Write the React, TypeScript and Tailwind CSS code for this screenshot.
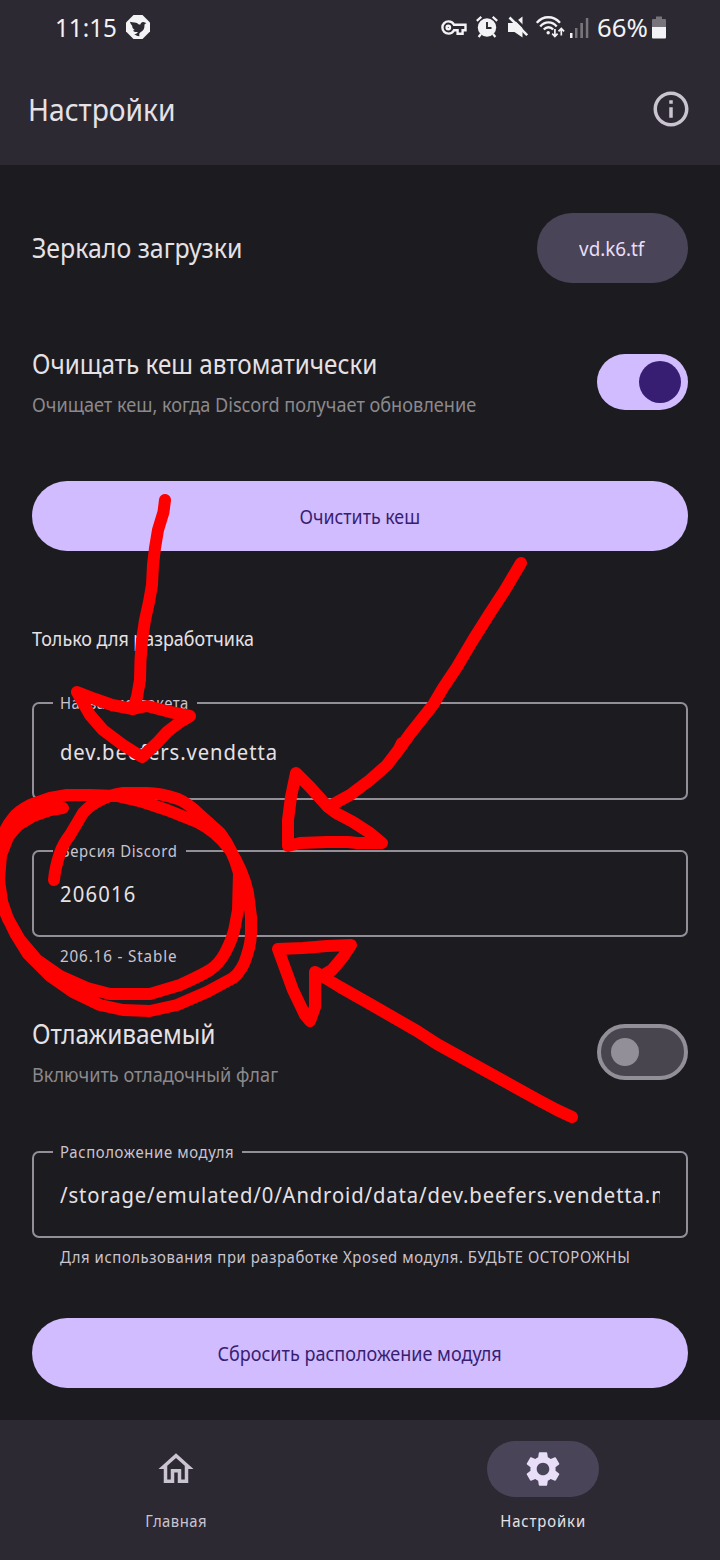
import type { ReactNode } from "react";
import { MdOutlineHome, MdOutlineInfo, MdSettings } from "react-icons/md";

function Dove() {
  return (
    <svg className="h-6 w-6" viewBox="0 0 24 24">
      <path fill="#f3f2f4" d="M7.500 0h9L24 7.500v9L16.500 24h-9L0 16.500v-9z" />
      <path
        fill="#2c2932"
        d="M4 6.800c1.500.5 3 .6 4.600.8 1.800.2 3.100.8 4.200 1.800l1.600.2c.4-1.700 1.400-2.600 2.900-2.500 1.200.1 1.700.6 3 .9l-1.800 1.500c.1 4-1 6.200-3.600 7.400-1.500.9-1.900 2-1.500 4.300-2.200-.1-4-.8-5.200-2.100 2-.2 3.200-.9 3.700-2.200-2.200.3-4-.2-4.900-1.500l1.700-.5C6.800 13.800 6 12.300 6.200 10.800 5 9.700 4.200 8.200 4 6.800z"
      />
    </svg>
  );
}

function KeyIcon() {
  return (
    <svg className="h-[15px] w-[26px]" viewBox="0 0 26 15" fill="none" stroke="#f3f2f4" strokeWidth="2.400">
      <path d="M13 4.800C11.900 2.400 9.800 1.400 7.500 1.400a6 6 0 0 0 0 12.200c2.300 0 4.400-1.200 5.500-3.400h3.600v3.500h5v-3.500h2.900V4.800z" />
      <circle cx="7.300" cy="7.500" r="1.700" />
    </svg>
  );
}

function AlarmIcon() {
  return (
    <svg className="h-[22px] w-[22px]" viewBox="0 0 22 22" fill="none" stroke="#f3f2f4">
      <circle cx="11" cy="11.500" r="9.200" fill="#f3f2f4" stroke="none" />
      <path strokeWidth="2.200" d="M.8 4.800 5.300.9M21.200 4.800 16.700.9M5 18l-2.400 3M17 18l2.400 3" />
      <path stroke="#2c2932" strokeWidth="1.900" d="M11 6v6h4.500" />
    </svg>
  );
}

function MuteIcon() {
  return (
    <svg className="h-[22px] w-[20px]" viewBox="0 0 20 22" fill="none">
      <path fill="#f3f2f4" d="M0 7h6L14.500.5v21L6.500 16H0z" />
      <path stroke="#2c2932" strokeWidth="2.600" d="M3.800-.5 22 17.700" />
      <path stroke="#f3f2f4" strokeWidth="2.600" d="M1.500 1.500 19.200 19.200" />
    </svg>
  );
}

function WifiIcon() {
  return (
    <svg className="h-[22px] w-[29px]" viewBox="0 0 29 22" fill="none" stroke="#f3f2f4" strokeWidth="2.300">
      <path d="M.8 6.800C7-.6 17.500-.6 24 6.800M4.200 10.400c4.700-5.400 11.900-5.400 16.500 0M7.800 13.500c2.600-3 6.800-3 9.400 0" />
      <circle cx="12.200" cy="16.800" r="1.700" fill="#f3f2f4" stroke="none" />
      <path strokeWidth="1.700" d="M18.900 13v7M16.200 17.600l2.700 2.900 2.700-2.900M25.300 19.500v-6.500M22.500 15.400l2.800-2.900 2.800 2.900" />
    </svg>
  );
}

function SignalIcon() {
  return (
    <svg className="h-[21px] w-[19px]" viewBox="0 0 19 21" fill="#77747b">
      <rect x="0" y="16" width="2.500" height="5" fill="#f3f2f4" />
      <rect x="5" y="11" width="2.500" height="10" />
      <rect x="10.300" y="6" width="2.700" height="15" />
      <rect x="15.800" y="1" width="2.500" height="20" />
    </svg>
  );
}

function BatteryIcon() {
  return (
    <svg className="h-[23px] w-[14px]" viewBox="0 0 14 23" fill="#77747b">
      <path d="M4 .5h6V3h3a1 1 0 0 1 1 1v7H0V4a1 1 0 0 1 1-1h3z" />
      <path fill="#f3f2f4" d="M0 11h14v10.500a1 1 0 0 1-1 1H1a1 1 0 0 1-1-1z" />
    </svg>
  );
}

function FilledButton({ children }: { children: ReactNode }) {
  return (
    <button className="flex h-[70px] w-full items-center justify-center rounded-full bg-[#d1bcff] pt-0.5 text-[20px] leading-7 text-[#381e72]">
      {children}
    </button>
  );
}

function SettingText({ title, subtitle }: { title: ReactNode; subtitle: ReactNode }) {
  return (
    <div className="flex flex-col gap-[9px] pt-px whitespace-nowrap">
      <div className="h-9 text-[27px] leading-9">{title}</div>
      <div className="h-7 text-[20px] leading-7 text-[#8b898d]">{subtitle}</div>
    </div>
  );
}

function Field({ label, children }: { label: ReactNode; children: ReactNode }) {
  return (
    <fieldset className="h-full min-w-0 rounded-[7px] border-2 border-[#938f99] px-[26px]">
      <legend className="-ml-[7px] h-6 pl-[7px] text-[16px] leading-6 whitespace-nowrap text-[#cac4d0]">{label}</legend>
      {children}
    </fieldset>
  );
}

function Annotations() {
  return (
    <svg
      className="pointer-events-none absolute inset-0 h-[1560px] w-[720px]"
      viewBox="0 0 720 1560"
      fill="none"
      stroke="#ff0000"
      strokeWidth="12"
      strokeLinecap="round"
      strokeLinejoin="round"
    >
      <path d="M165 500 163.500 512 158 530 155 548 153 565 152 585 149 602 145 620 142 640 140.500 660 140 680 137 697 133 709" />
      <path d="M133 709 112 705 95 699 77 692 90 715 103 730 123 745 142 757 157 743 167 732 180 722 190 716 170 712 147 706 133 709" />
      <path d="M521 563 505 590 490 613 473 640 457 667 443 688 433 705 410 734 400 748 387 765 370 780 350 795 328 807M402 743 399 749" />
      <path d="M328 807 310 787 296 773 291 797 288 820 288 846 300 843 327 842 348 842 357 843 382 843 370 833 353 822 336 813 328 807" />
      <path d="M572 1117 557 1110 540 1101 493 1075 437 1044 417 1031 370 1004 340 987 322 976 315 972 315 1007 310 1021 305 1015 293 990 278 949 303 948 327 946 351 945 343 957 332 970 322 976" />
      <path d="M63 808 50 810 33 816 18 825 8 837 1 855 -1 880 3 908 15 933 28 954 50 976 73 992 100 1005 123 1010 150 1011 177 1005 207 992 233 978 Q243 970 247 955 Q251 943 251 933 L251 917 248 893 Q243 870 230 850 Q217 832 197 822 L167 810 143 802 117 796 90 795 67 795 50 798 30 805 Q18 811 13 818 Q3 830 1 845 L-1 863 -1 893 8 919 20 940 37 960 60 976 87 988 110 994 150 994 180 985 Q200 976 210 970 Q219 964 225 953 Q233 938 235 926 L238 910 239 873 Q233 850 220 833 L200 815 Q188 803 178 799 Q160 793 147 793 L123 793 Q108 795 97 802 Q89 806 83 813 L70 835 Q63 844 60 853 Q55 868 54 880" />
    </svg>
  );
}

export default function App() {
  return (
    <div className="relative flex h-[1560px] w-[720px] flex-col overflow-hidden bg-[#1c1b1f] font-['Noto_Sans',sans-serif] text-[#e6e1e5]">
      <header className="flex h-[165px] flex-col bg-[#2c2932]">
        <div className="flex h-[54px] items-center pl-[55px] text-[26px] leading-9 text-[#f3f2f4]">
          <span className="w-[71px]">
            <span className="inline-block origin-left scale-x-[.93]">11:15</span>
          </span>
          <Dove />
          <div className="ml-[291px] flex items-center">
            <KeyIcon />
            <div className="ml-[9px] flex"><AlarmIcon /></div>
            <div className="ml-2.5 flex"><MuteIcon /></div>
            <div className="ml-2 flex"><WifiIcon /></div>
            <div className="ml-[5px] flex"><SignalIcon /></div>
            <span className="ml-2 w-[55px]">
              <span className="inline-block origin-left scale-x-[.99]">66%</span>
            </span>
            <BatteryIcon />
          </div>
        </div>
        <div className="flex h-[110px] items-center justify-between pr-7 pl-7">
          <h1 className="origin-left scale-x-[.94] pt-0.5 text-[30px] leading-10">Настройки</h1>
          <MdOutlineInfo className="h-[42px] w-[42px] text-[#cac4d0]" />
        </div>
      </header>

      <main className="flex h-[1255px] flex-col px-8">
        <div className="mt-12 flex h-[70px] shrink-0 items-center justify-between">
          <span className="origin-left scale-x-[.922] text-[27px] leading-9">Зеркало загрузки</span>
          <button className="flex h-[70px] w-[151px] items-center justify-center rounded-full bg-[#4a4458] pt-0.5 pr-0.5 text-[20px] leading-7 text-[#e8def8]">
            <span className="scale-x-[.94]">vd.k6.tf</span>
          </button>
        </div>

        <div className="mt-[63px] flex h-[72px] items-center justify-between">
          <SettingText
            title={<span className="inline-block origin-left scale-x-[.898]">Очищать кеш автоматически</span>}
            subtitle={<span className="inline-block origin-left scale-x-[.906]">Очищает кеш, когда Discord получает обновление</span>}
          />
          <div className="flex h-14 w-[91px] shrink-0 items-center justify-end rounded-full bg-[#d1bcff] pr-[7px]">
            <div className="h-[42px] w-[42px] rounded-full bg-[#381e72]" />
          </div>
        </div>

        <div className="mt-[63px]">
          <FilledButton><span className="scale-x-[.89]">Очистить кеш</span></FilledButton>
        </div>

        <h2 className="mt-[74px] h-7 origin-left scale-x-[.895] text-[20px] leading-7">Только для разработчика</h2>

        <div className="mt-[38px] h-[109px]">
          <Field label={<span className="block w-[137px] origin-left scale-x-[.93] tracking-[0.5px]">Название пакета</span>}>
            <div className="mt-5 h-8 origin-left scale-x-[.92] text-[22px] leading-8 tracking-[1px]">dev.beefers.vendetta</div>
          </Field>
        </div>

        <div className="mt-[39px] h-[98px]">
          <Field label={<span className="block w-[126px] origin-left scale-x-[.93] tracking-[0.65px]">Версия Discord</span>}>
            <div className="mt-[14px] h-8 origin-left scale-x-[.92] text-[22px] leading-8 tracking-[1.3px]">206016</div>
          </Field>
        </div>
        <p className="mt-[7px] h-6 origin-left scale-x-[.95] pl-[29.500px] text-[16px] leading-6 tracking-[0.9px] text-[#cac4d0]">206.16 - Stable</p>

        <div className="mt-12 flex h-[72px] items-center justify-between">
          <SettingText
            title={<span className="inline-block origin-left scale-x-[.904]">Отлаживаемый</span>}
            subtitle={<span className="inline-block origin-left scale-x-[.908]">Включить отладочный флаг</span>}
          />
          <div className="flex h-14 w-[91px] shrink-0 items-center rounded-full border-4 border-[#938f99] bg-[#49454f] pl-2.5">
            <div className="h-7 w-7 rounded-full bg-[#938f99]" />
          </div>
        </div>

        <div className="mt-[52px] h-[98px]">
          <Field label={<span className="block w-[182px] origin-left scale-x-[.93] tracking-[0.68px]">Расположение модуля</span>}>
            <div className="mt-[14px] h-8 overflow-hidden">
              <div className="origin-left scale-x-[.92] text-[22px] leading-8 tracking-[0.97px] whitespace-nowrap">
                /storage/emulated/0/Android/data/dev.beefers.vendetta.manager
              </div>
            </div>
          </Field>
        </div>
        <p className="mt-[7px] h-6 origin-left scale-x-[.93] pl-[30px] text-[16px] leading-6 tracking-[0.6px] whitespace-nowrap text-[#cac4d0]">
          Для использования при разработке Xposed модуля. БУДЬТЕ ОСТОРОЖНЫ
        </p>

        <div className="mt-[49px]">
          <FilledButton><span className="scale-x-[.902]">Сбросить расположение модуля</span></FilledButton>
        </div>
      </main>

      <nav className="flex h-[140px] justify-between bg-[#2c2932] pt-[21px] text-[16px] leading-6">
        <div className="flex w-[352px] flex-col items-center gap-3 text-[#cac4d0]">
          <div className="flex h-14 w-28 items-center justify-center">
            <MdOutlineHome className="h-[42px] w-[42px]" />
          </div>
          <span className="scale-x-[.93] tracking-[0.5px]">Главная</span>
        </div>
        <div className="flex w-[354px] flex-col items-center gap-3">
          <div className="flex h-14 w-28 items-center justify-center rounded-full bg-[#4a4458]">
            <MdSettings className="h-[42px] w-[42px] text-[#e8def8]" />
          </div>
          <span className="scale-x-[.93] tracking-[0.95px]">Настройки</span>
        </div>
      </nav>

      <Annotations />
    </div>
  );
}
